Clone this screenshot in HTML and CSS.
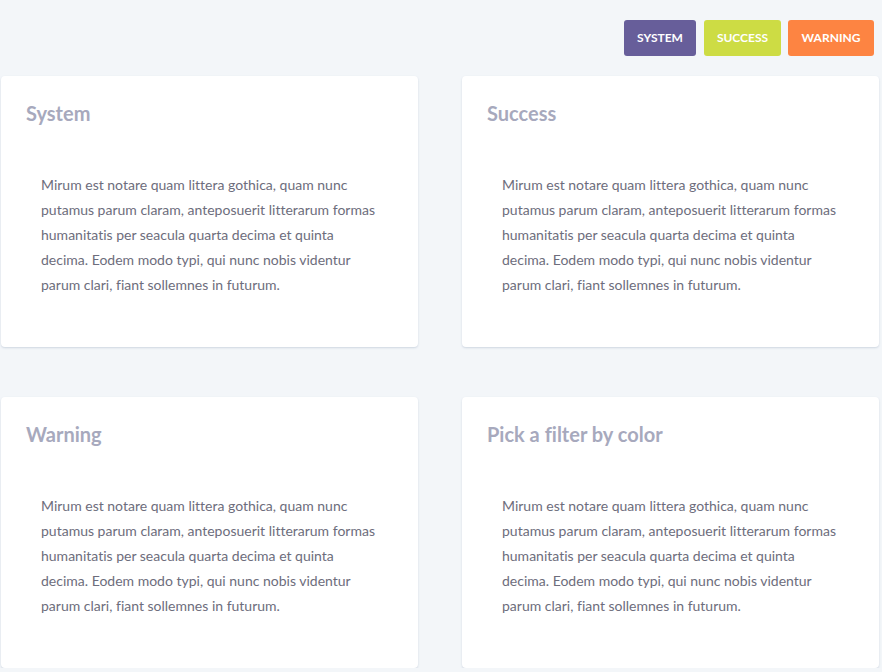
FILE: index.html
```html
<!DOCTYPE html>
<html>
<head>
<meta charset="utf-8">
<link rel="stylesheet" href="styles.css">
</head>
<body>
<div class="toolbar">
  <button class="btn btn-system">System</button>
  <button class="btn btn-success">Success</button>
  <button class="btn btn-warning">Warning</button>
</div>
<div class="grid">
  <div class="card">
    <div class="card-head">System</div>
    <div class="card-body">Mirum est notare quam littera gothica, quam nunc putamus parum claram, anteposuerit litterarum formas humanitatis per seacula quarta decima et quinta decima. Eodem modo typi, qui nunc nobis videntur parum clari, fiant sollemnes in futurum.</div>
  </div>
  <div class="card">
    <div class="card-head">Success</div>
    <div class="card-body">Mirum est notare quam littera gothica, quam nunc putamus parum claram, anteposuerit litterarum formas humanitatis per seacula quarta decima et quinta decima. Eodem modo typi, qui nunc nobis videntur parum clari, fiant sollemnes in futurum.</div>
  </div>
  <div class="card">
    <div class="card-head">Warning</div>
    <div class="card-body">Mirum est notare quam littera gothica, quam nunc putamus parum claram, anteposuerit litterarum formas humanitatis per seacula quarta decima et quinta decima. Eodem modo typi, qui nunc nobis videntur parum clari, fiant sollemnes in futurum.</div>
  </div>
  <div class="card">
    <div class="card-head">Pick a filter by color</div>
    <div class="card-body">Mirum est notare quam littera gothica, quam nunc putamus parum claram, anteposuerit litterarum formas humanitatis per seacula quarta decima et quinta decima. Eodem modo typi, qui nunc nobis videntur parum clari, fiant sollemnes in futurum.</div>
  </div>
</div>
</body>
</html>
```
FILE: styles.css
```css
html, body {
  margin: 0;
  padding: 0;
  background: #f3f6f9;
  font-family: Lato, "Open Sans", sans-serif;
  font-variant-ligatures: none;
  font-feature-settings: "liga" 0, "clig" 0;
}
.toolbar {
  display: flex;
  justify-content: flex-end;
  gap: 7px;
  padding: 20px 8px 0 0;
  height: 36px;
}
.btn {
  border: none;
  border-radius: 3px;
  color: #fff;
  font-family: Lato, sans-serif;
  font-variant-ligatures: none;
  font-weight: 700;
  font-size: 12px;
  line-height: 14px;
  text-transform: uppercase;
  height: 36px;
  padding: 0 0 1px 0;
}
.btn-system { background: #675e9a; width: 72px; margin-right: 1px; }
.btn-success { background: #cddc44; width: 77px; }
.btn-warning { background: #fd8442; width: 86px; }
.grid {
  display: grid;
  grid-template-columns: 417px 417px;
  column-gap: 44px;
  row-gap: 50px;
  padding: 20px 0 0 1px;
}
.card {
  background: #fff;
  border-radius: 4px;
  box-shadow: 0 1px 2px rgba(160, 175, 195, 0.45);
  height: 271px;
  box-sizing: border-box;
}
.card-head {
  padding: 24px 25px 26px;
  font-size: 20px;
  line-height: 26px;
  font-weight: 700;
  color: #a7a9bd;
}
.card-body {
  padding: 20px 40px 0 40px;
  font-size: 14px;
  line-height: 25px;
  color: #6d6d7c;
}
```
